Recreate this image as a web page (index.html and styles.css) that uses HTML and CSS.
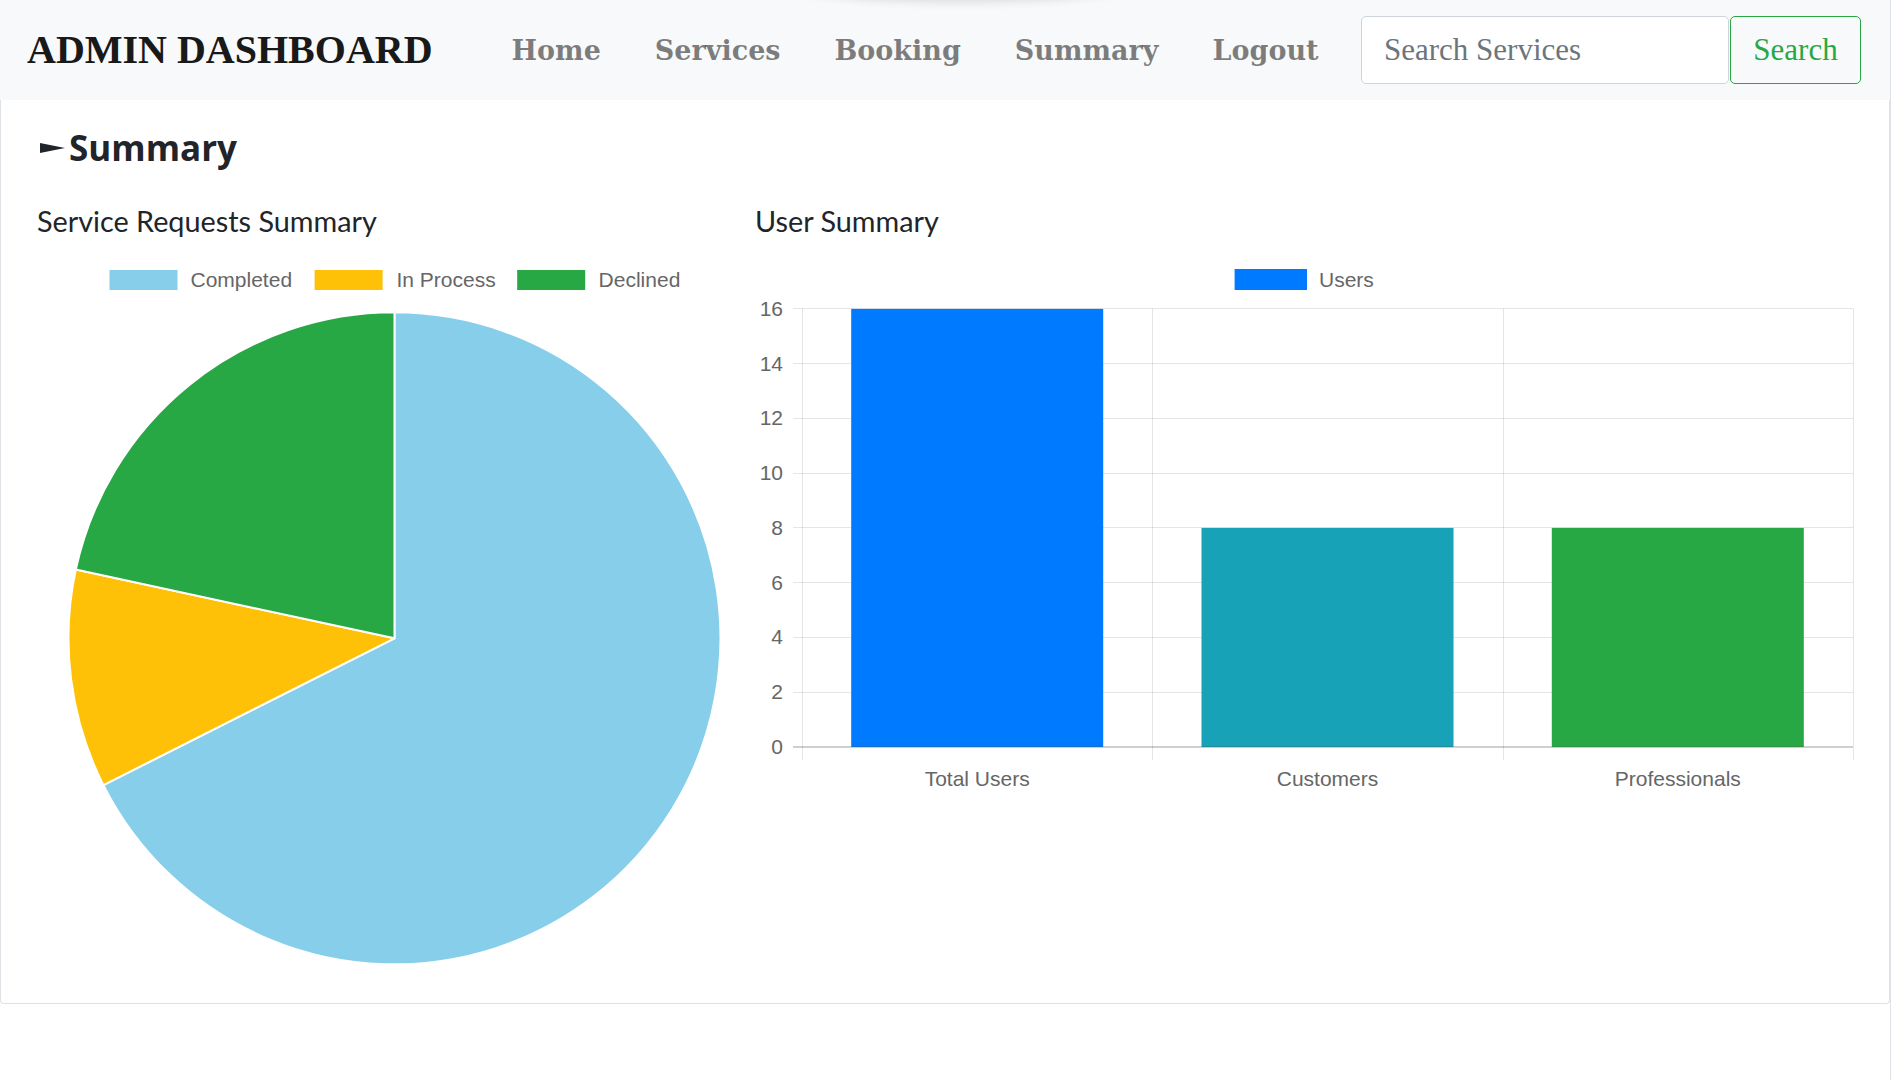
FILE: index.html
```html
<!DOCTYPE html>
<html lang="en">
<head>
<meta charset="utf-8">
<title>Admin Dashboard</title>
<link rel="stylesheet" href="styles.css">
</head>
<body>
<div class="page">
  <div class="top-shadow"></div>
  <nav class="navbar">
    <a class="brand" href="#">ADMIN DASHBOARD</a>
    <ul class="nav">
      <li><a href="#">Home</a></li>
      <li><a href="#">Services</a></li>
      <li><a href="#">Booking</a></li>
      <li><a href="#">Summary</a></li>
      <li><a href="#">Logout</a></li>
    </ul>
    <form class="search">
      <input type="search" placeholder="Search Services">
      <button type="button">Search</button>
    </form>
  </nav>

  <section class="card">
    <h3 class="title"><svg class="marker" width="25" height="10" viewBox="0 0 25 10"><polygon points="0,0 25,5 0,10" fill="#212529"/></svg>Summary</h3>
    <div class="row">
      <div class="col">
        <h5 class="sub">Service Requests Summary</h5>
        <svg class="chart" width="715" height="750" viewBox="0 0 715 750">
          <g class="legend">
            <rect x="72.5" y="32" width="68" height="20" fill="#87CEEB"/>
            <text x="153.5" y="48.5">Completed</text>
            <rect x="277.6" y="32" width="68" height="20" fill="#FFC107"/>
            <text x="359.5" y="48.5">In Process</text>
            <rect x="480.2" y="32" width="68" height="20" fill="#28A745"/>
            <text x="561.6" y="48.5">Declined</text>
          </g>
          <g stroke="#fff" stroke-width="2" stroke-linejoin="round">
            <path d="M357.5,400.3 L357.5,74.3 A326,326 0 1 1 66.4,547.1 Z" fill="#87CEEB"/>
            <path d="M357.5,400.3 L66.4,547.1 A326,326 0 0 1 38.8,331.6 Z" fill="#FFC107"/>
            <path d="M357.5,400.3 L38.8,331.6 A326,326 0 0 1 357.5,74.3 Z" fill="#28A745"/>
          </g>
        </svg>
      </div>
      <div class="col">
        <h5 class="sub">User Summary</h5>
        <svg class="chart" width="1100" height="750" viewBox="0 0 1100 750">
          <g class="legend">
            <rect x="479.6" y="31" width="72.4" height="21" fill="#007BFF"/>
            <text x="564" y="48.5">Users</text>
          </g>
          <g stroke="rgba(0,0,0,0.1)" stroke-width="1">
            <line x1="38" y1="454.5" x2="1098" y2="454.5"/>
            <line x1="38" y1="399.5" x2="1098" y2="399.5"/>
            <line x1="38" y1="344.5" x2="1098" y2="344.5"/>
            <line x1="38" y1="289.5" x2="1098" y2="289.5"/>
            <line x1="38" y1="235.5" x2="1098" y2="235.5"/>
            <line x1="38" y1="180.5" x2="1098" y2="180.5"/>
            <line x1="38" y1="125.5" x2="1098" y2="125.5"/>
            <line x1="38" y1="70.5" x2="1098" y2="70.5"/>
            <line x1="47.5" y1="70.5" x2="47.5" y2="522"/>
            <line x1="397.5" y1="70.5" x2="397.5" y2="522"/>
            <line x1="748.5" y1="70.5" x2="748.5" y2="522"/>
            <line x1="1098.5" y1="70.5" x2="1098.5" y2="522"/>
          </g>
          <g>
            <rect x="96.2" y="70.9" width="252" height="438" fill="#007BFF"/>
            <rect x="446.5" y="289.9" width="252" height="219" fill="#17A2B8"/>
            <rect x="796.8" y="289.9" width="252" height="219" fill="#28A745"/>
          </g>
          <line x1="38" y1="509" x2="1098" y2="509" stroke="rgba(0,0,0,0.25)" stroke-width="1.5"/>
          <g class="ticks-y">
            <text x="28" y="516">0</text>
            <text x="28" y="461.2">2</text>
            <text x="28" y="406.4">4</text>
            <text x="28" y="351.7">6</text>
            <text x="28" y="296.9">8</text>
            <text x="28" y="242.2">10</text>
            <text x="28" y="187.4">12</text>
            <text x="28" y="132.7">14</text>
            <text x="28" y="77.9">16</text>
          </g>
          <g class="ticks-x">
            <text x="222.2" y="548">Total Users</text>
            <text x="572.5" y="548">Customers</text>
            <text x="922.8" y="548">Professionals</text>
          </g>
        </svg>
      </div>
    </div>
  </section>
</div>
</body>
</html>
```

FILE: styles.css
```css
html, body {
  margin: 0;
  padding: 0;
  background: #fff;
}

body {
  font-family: "Open Sans", "Liberation Sans", sans-serif;
  color: #212529;
}

.page {
  position: relative;
  width: 1891px;
  min-height: 1080px;
  box-sizing: border-box;
  border-right: 1px solid #dee2e6;
  overflow: hidden;
}

.top-shadow {
  position: absolute;
  top: -30px;
  left: 795px;
  width: 330px;
  height: 30px;
  border-radius: 50%;
  box-shadow: 0 2px 10px rgba(0, 0, 0, 0.12);
}

/* Navbar */
.navbar {
  display: flex;
  align-items: center;
  height: 100px;
  box-sizing: border-box;
  padding: 0 29px 0 27px;
  background: #f8f9fa;
}

.brand {
  font: 700 40px/48px "Liberation Serif", "Times New Roman", serif;
  color: #191919;
  text-decoration: none;
  margin-right: 79px;
  margin-top: -1px;
}

.nav {
  display: flex;
  gap: 54px;
  list-style: none;
  margin: 2px 0 0;
  padding: 0;
}

.nav a {
  font: 700 27px/40px "DejaVu Serif", Georgia, serif;
  color: rgba(0, 0, 0, 0.5);
  text-decoration: none;
}

.search {
  margin: 0 0 0 auto;
  display: flex;
  gap: 1px;
}

.search input {
  width: 368px;
  height: 68px;
  box-sizing: border-box;
  border: 1px solid #ced4da;
  border-radius: 5px;
  padding: 0 22px;
  font: 400 31px "Liberation Serif", serif;
  color: #495057;
  background: #fff;
  outline: none;
}

.search input::placeholder {
  color: #6c757d;
}

.search button {
  width: 131px;
  height: 68px;
  box-sizing: border-box;
  border: 1px solid #28a745;
  border-radius: 5px;
  background: transparent;
  color: #28a745;
  font: 400 31px "Liberation Serif", serif;
  padding: 0;
}

/* Card */
.card {
  border: 1px solid #dee2e6;
  border-top: 0;
  border-radius: 0 0 4px 4px;
  padding: 27px 34px 15px 36px;
  background: #fff;
}

.title {
  display: flex;
  align-items: center;
  gap: 4px;
  margin: 0 0 36px 3px;
  font: 700 35px/41px "Open Sans", sans-serif;
  color: #212529;
}

.marker {
  display: block;
}

.row {
  display: grid;
  grid-template-columns: 715px 1100px;
  column-gap: 3px;
}

.sub {
  margin: 0;
  font: 400 28.8px/34px "Lato", "Open Sans", sans-serif;
  color: #212529;
}

.chart {
  display: block;
}

.chart text {
  font-family: "Liberation Sans", Arial, sans-serif;
  font-size: 21px;
  fill: #666;
}

.ticks-y text {
  text-anchor: end;
}

.ticks-x text {
  text-anchor: middle;
}
```
